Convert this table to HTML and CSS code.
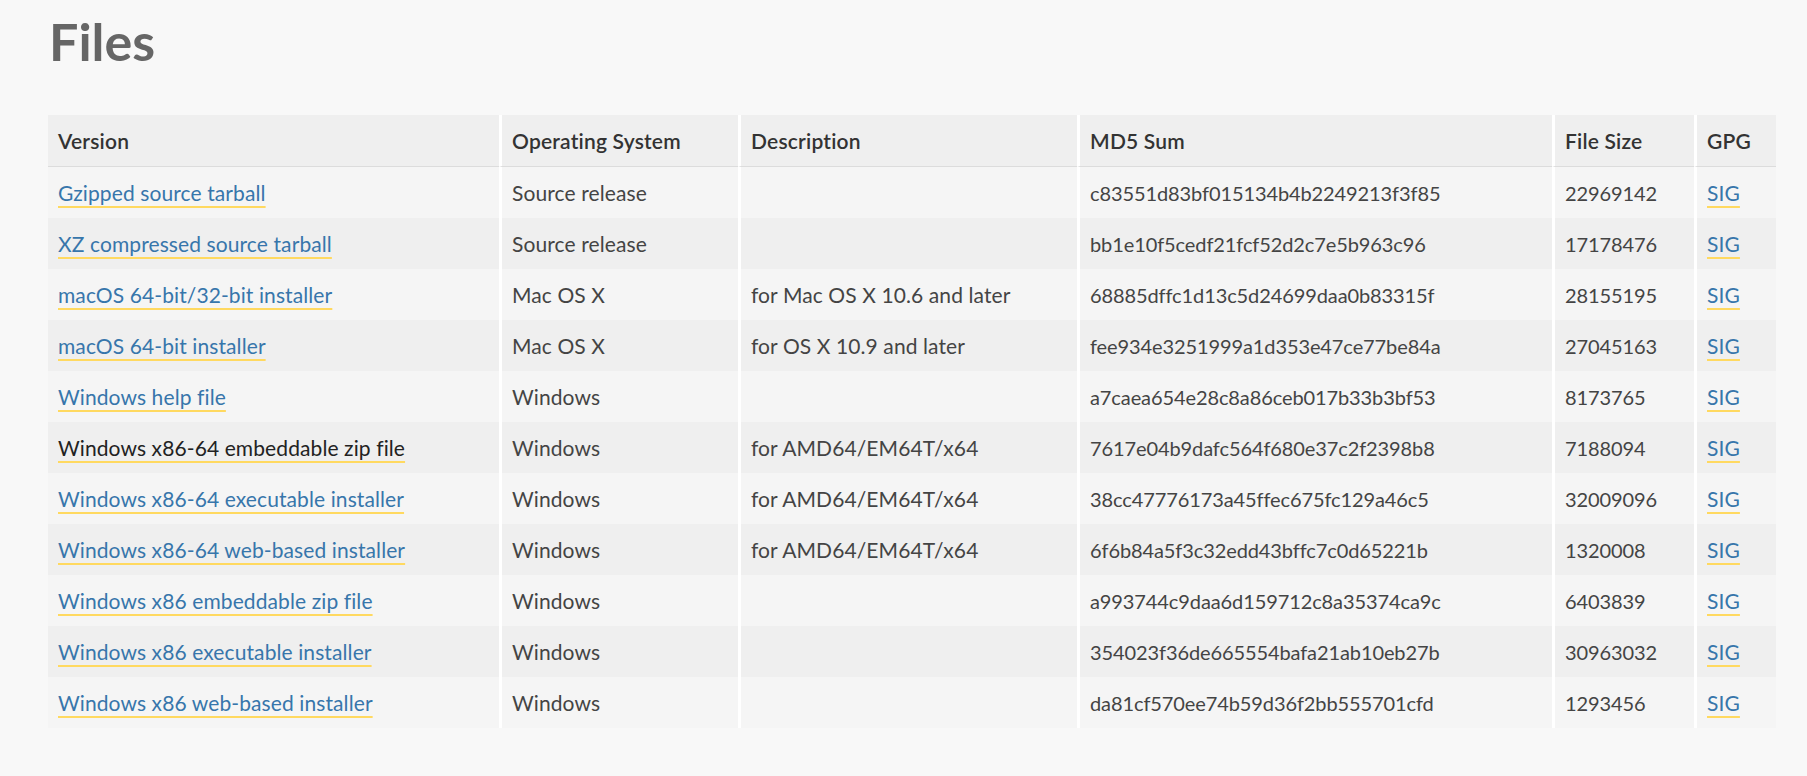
FILE: index.html
```html
<!DOCTYPE html>
<html lang="en">
<head>
<meta charset="utf-8">
<title>Files</title>
<link rel="stylesheet" href="styles.css">
</head>
<body>
<main class="page">
  <h1 class="title">Files</h1>
  <table class="files">
    <colgroup>
      <col class="c-version">
      <col class="c-os">
      <col class="c-desc">
      <col class="c-md5">
      <col class="c-size">
      <col class="c-gpg">
    </colgroup>
    <thead>
      <tr>
        <th>Version</th>
        <th>Operating System</th>
        <th>Description</th>
        <th>MD5 Sum</th>
        <th>File Size</th>
        <th>GPG</th>
      </tr>
    </thead>
    <tbody>
      <tr>
        <td><a href="#">Gzipped source tarball</a></td>
        <td>Source release</td>
        <td></td>
        <td class="num">c83551d83bf015134b4b2249213f3f85</td>
        <td class="num">22969142</td>
        <td><a href="#">SIG</a></td>
      </tr>
      <tr>
        <td><a href="#">XZ compressed source tarball</a></td>
        <td>Source release</td>
        <td></td>
        <td class="num">bb1e10f5cedf21fcf52d2c7e5b963c96</td>
        <td class="num">17178476</td>
        <td><a href="#">SIG</a></td>
      </tr>
      <tr>
        <td><a href="#">macOS 64-bit/32-bit installer</a></td>
        <td>Mac OS X</td>
        <td>for Mac OS X 10.6 and later</td>
        <td class="num">68885dffc1d13c5d24699daa0b83315f</td>
        <td class="num">28155195</td>
        <td><a href="#">SIG</a></td>
      </tr>
      <tr>
        <td><a href="#">macOS 64-bit installer</a></td>
        <td>Mac OS X</td>
        <td>for OS X 10.9 and later</td>
        <td class="num">fee934e3251999a1d353e47ce77be84a</td>
        <td class="num">27045163</td>
        <td><a href="#">SIG</a></td>
      </tr>
      <tr>
        <td><a href="#">Windows help file</a></td>
        <td>Windows</td>
        <td></td>
        <td class="num">a7caea654e28c8a86ceb017b33b3bf53</td>
        <td class="num">8173765</td>
        <td><a href="#">SIG</a></td>
      </tr>
      <tr>
        <td><a href="#" class="hovered">Windows x86-64 embeddable zip file</a></td>
        <td>Windows</td>
        <td>for AMD64/EM64T/x64</td>
        <td class="num">7617e04b9dafc564f680e37c2f2398b8</td>
        <td class="num">7188094</td>
        <td><a href="#">SIG</a></td>
      </tr>
      <tr>
        <td><a href="#">Windows x86-64 executable installer</a></td>
        <td>Windows</td>
        <td>for AMD64/EM64T/x64</td>
        <td class="num">38cc47776173a45ffec675fc129a46c5</td>
        <td class="num">32009096</td>
        <td><a href="#">SIG</a></td>
      </tr>
      <tr>
        <td><a href="#">Windows x86-64 web-based installer</a></td>
        <td>Windows</td>
        <td>for AMD64/EM64T/x64</td>
        <td class="num">6f6b84a5f3c32edd43bffc7c0d65221b</td>
        <td class="num">1320008</td>
        <td><a href="#">SIG</a></td>
      </tr>
      <tr>
        <td><a href="#">Windows x86 embeddable zip file</a></td>
        <td>Windows</td>
        <td></td>
        <td class="num">a993744c9daa6d159712c8a35374ca9c</td>
        <td class="num">6403839</td>
        <td><a href="#">SIG</a></td>
      </tr>
      <tr>
        <td><a href="#">Windows x86 executable installer</a></td>
        <td>Windows</td>
        <td></td>
        <td class="num">354023f36de665554bafa21ab10eb27b</td>
        <td class="num">30963032</td>
        <td><a href="#">SIG</a></td>
      </tr>
      <tr>
        <td><a href="#">Windows x86 web-based installer</a></td>
        <td>Windows</td>
        <td></td>
        <td class="num">da81cf570ee74b59d36f2bb555701cfd</td>
        <td class="num">1293456</td>
        <td><a href="#">SIG</a></td>
      </tr>
    </tbody>
  </table>
</main>
</body>
</html>
```

FILE: styles.css
```css
html, body {
  margin: 0;
  padding: 0;
  background: #f8f8f8;
}

body {
  font-family: Lato, "Open Sans", "Liberation Sans", sans-serif;
  color: #444;
}

.page {
  padding: 16px 31px 0 48px;
}

.title {
  margin: 0 0 48px 1px;
  font-size: 52px;
  line-height: 51px;
  font-weight: 700;
  color: #666;
}

.files {
  width: 1728px;
  table-layout: fixed;
  border-collapse: separate;
  border-spacing: 0;
  font-size: 21px;
  letter-spacing: 0.1px;
}

.c-version { width: 451px; }
.c-os { width: 239px; }
.c-desc { width: 339px; }
.c-md5 { width: 475px; }
.c-size { width: 142px; }
.c-gpg { width: 82px; }

.files th,
.files td {
  height: 51px;
  padding: 0 0 0 10px;
  text-align: left;
  vertical-align: middle;
  line-height: 1;
  white-space: nowrap;
  border-left: 3px solid #fff;
}

.files th:first-child,
.files td:first-child {
  border-left: 0;
}

.files th {
  background: #efefef;
  color: #333;
  font-weight: 600;
  letter-spacing: 0.2px;
  border-bottom: 1px solid #dcdcdc;
}

.files td.num {
  font-size: 20px;
  letter-spacing: -0.1px;
}

.files tbody tr:nth-child(odd) td {
  background: #f5f5f5;
}

.files tbody tr:nth-child(even) td {
  background: #efefef;
}

.files a {
  color: #3776ab;
  text-decoration: underline;
  text-decoration-color: #ffd960;
  text-decoration-thickness: 2px;
  text-underline-offset: 5px;
  text-decoration-skip-ink: none;
}

.files a.hovered {
  color: #222;
}
```
